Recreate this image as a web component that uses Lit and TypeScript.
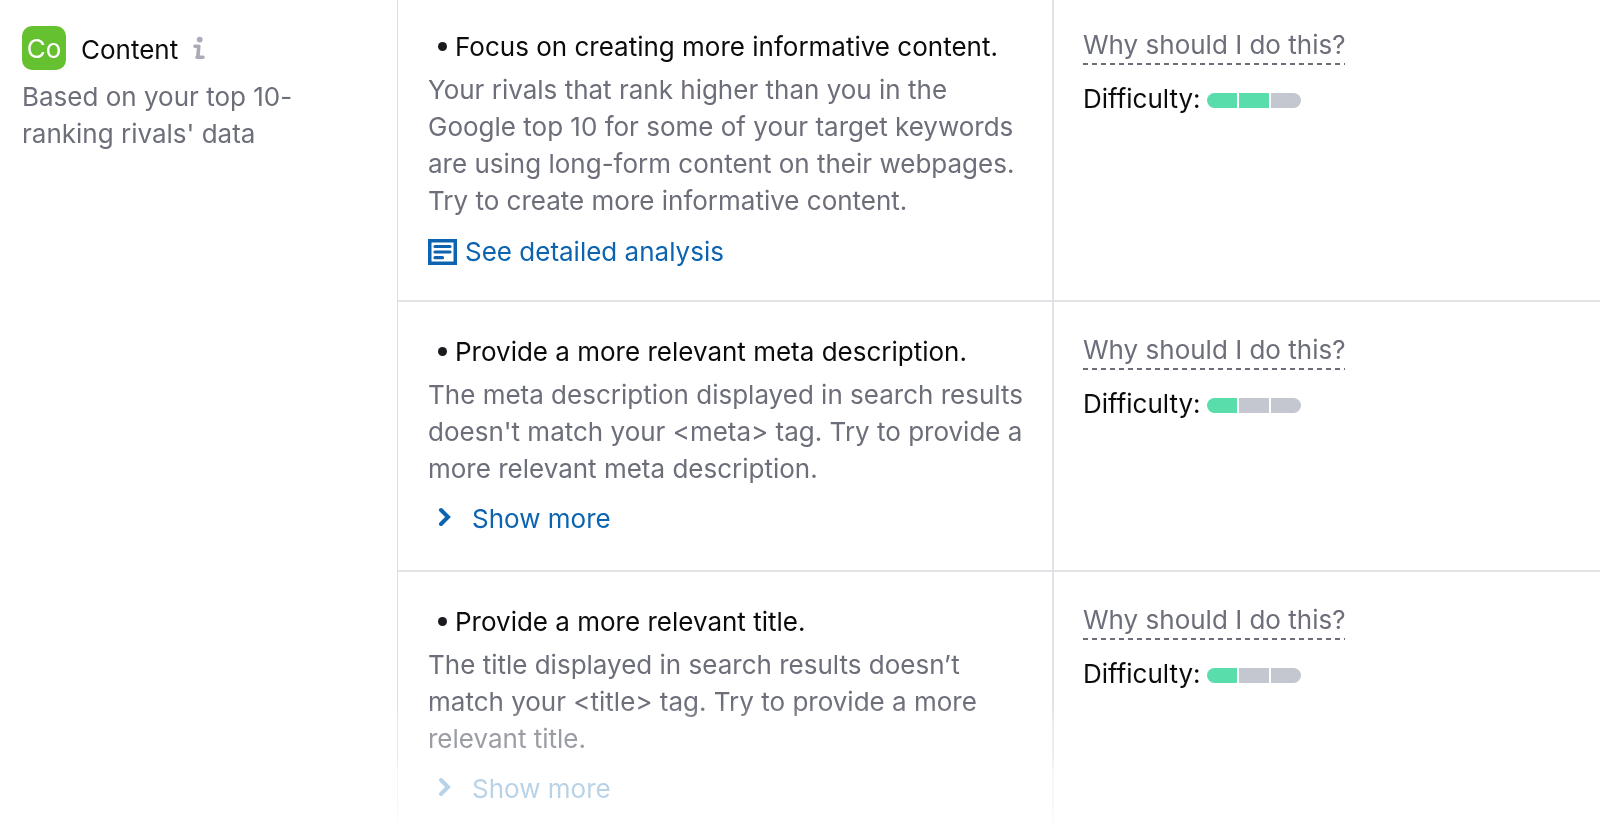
import { LitElement, html, css } from "lit";
import { customElement, property } from "lit/decorators.js";

interface Idea {
  title: string;
  text: string;
  action: "analysis" | "more";
  difficulty: number;
}

const IDEAS: Idea[] = [
  {
    title: "Focus on creating more informative content.",
    text: "Your rivals that rank higher than you in the Google top 10 for some of your target keywords are using long-form content on their webpages. Try to create more informative content.",
    action: "analysis",
    difficulty: 2,
  },
  {
    title: "Provide a more relevant meta description.",
    text: "The meta description displayed in search results doesn't match your <meta> tag. Try to provide a more relevant meta description.",
    action: "more",
    difficulty: 1,
  },
  {
    title: "Provide a more relevant title.",
    text: "The title displayed in search results doesn’t match your <title> tag. Try to provide a more relevant title.",
    action: "more",
    difficulty: 1,
  },
];

@customElement("difficulty-meter")
export class DifficultyMeter extends LitElement {
  @property({ type: Number }) level = 0;

  static styles = css`
    :host {
      display: flex;
      align-items: center;
      gap: 6px;
      color: #0b0b0d;
    }
    .bars {
      display: flex;
      gap: 2px;
      padding-top: 4px;
    }
    .bar {
      width: 30px;
      height: 15px;
      background: #c4c7cf;
    }
    .bar.on {
      background: #59ddaa;
    }
    .bar:first-child {
      border-radius: 8px 0 0 8px;
    }
    .bar:last-child {
      border-radius: 0 8px 8px 0;
    }
  `;

  render() {
    return html`<span>Difficulty:</span>
      <span class="bars" role="img" aria-label="${this.level} of 3">
        ${[1, 2, 3].map((n) => html`<span class="bar ${n <= this.level ? "on" : ""}"></span>`)}
      </span>`;
  }
}

@customElement("app-root")
export class AppRoot extends LitElement {
  static styles = css`
    :host {
      display: block;
      background: #fff;
      font-family: Inter, "Liberation Sans", sans-serif;
      font-size: 26px;
      line-height: 37px;
      color: #6c6e79;
    }
    .board {
      display: grid;
      grid-template-columns: minmax(0, 397fr) minmax(0, 1203fr);
      mask-image: linear-gradient(
        to top,
        transparent 2px,
        rgb(0 0 0 / 0.29) 34px,
        rgb(0 0 0 / 0.29) 60px,
        rgb(0 0 0 / 0.68) 82px,
        rgb(0 0 0 / 0.68) 108px,
        #000 130px
      );
    }
    .category {
      padding: 26px 64px 0 22px;
    }
    .head {
      display: flex;
      align-items: center;
      gap: 15px;
      margin-bottom: 8px;
    }
    .badge {
      display: grid;
      place-items: center;
      width: 44px;
      height: 44px;
      border-radius: 10px;
      background: #66c130;
      color: #fff;
    }
    h2,
    h3,
    p {
      margin: 0;
      font: inherit;
    }
    h2,
    h3 {
      color: #0b0b0d;
    }
    h2 {
      padding-top: 2px;
    }
    .info {
      display: flex;
      border: 0;
      padding: 0;
      background: none;
      color: #a9abb6;
    }
    .ideas {
      border-left: 1px solid #dcdde1;
    }
    .idea {
      display: grid;
      grid-template-columns: minmax(0, 656fr) minmax(0, 546fr);
      border-bottom: 2px solid #e2e3e6;
    }
    .idea:last-child {
      border-bottom: 0;
    }
    .what {
      padding: 31px 26px 33px 30px;
      border-right: 2px solid #e2e3e6;
    }
    .why {
      display: flex;
      flex-direction: column;
      align-items: flex-start;
      gap: 15px;
      padding: 29px;
    }
    .idea:first-child .what {
      padding-top: 28px;
      padding-bottom: 30px;
    }
    .idea:first-child .why {
      padding-top: 26px;
    }
    .idea:last-child .what {
      padding-bottom: 27px;
    }
    h3 {
      display: flex;
      align-items: center;
      gap: 8px;
      padding-left: 10px;
      margin-bottom: 6px;
    }
    .dot {
      flex: none;
      width: 9px;
      height: 9px;
      border-radius: 50%;
      background: #1a1a1e;
    }
    .link {
      display: flex;
      align-items: center;
      width: fit-content;
      margin-top: 13px;
      border: 0;
      padding: 0;
      background: none;
      font: inherit;
      color: #0c64b0;
      text-decoration: none;
    }
    a.link {
      gap: 8px;
      margin-top: 14px;
    }
    button.link {
      gap: 20px;
      padding-left: 10px;
    }
    .reason {
      border: 0;
      padding: 0 0 2px;
      font: inherit;
      color: inherit;
      background: repeating-linear-gradient(90deg, #6c6e79 0 5px, transparent 5px 9px) bottom / 100% 2px no-repeat;
    }
    svg {
      flex: none;
      display: block;
    }
  `;

  private action(idea: Idea) {
    return idea.action === "analysis"
      ? html`<a class="link" href="#analysis">
          <svg width="29" height="26" viewBox="0 0 29 26" fill="none" stroke="currentColor" aria-hidden="true">
            <rect x="1.75" y="1.75" width="25.5" height="22.5" stroke-width="3.5" />
            <path d="M7 7.5h15M7 13h15M7 18.7h7.5" stroke-width="3.2" stroke-linecap="round" />
          </svg>
          <span>See detailed analysis</span>
        </a>`
      : html`<button class="link" type="button">
          <svg width="14" height="24" viewBox="0 0 14 24" fill="none" stroke="currentColor" stroke-width="4" aria-hidden="true">
            <path d="M3 3 10 10 3 17" stroke-linecap="round" />
          </svg>
          <span>Show more</span>
        </button>`;
  }

  render() {
    return html`<main class="board">
      <section class="category">
        <div class="head">
          <span class="badge">Co</span>
          <h2>Content</h2>
          <button class="info" type="button" aria-label="About content ideas">
            <svg width="12" height="24" viewBox="0 0 12 24" fill="none" stroke="currentColor" aria-hidden="true">
              <circle cx="6.7" cy="3.6" r="2.9" fill="currentColor" stroke="none" />
              <path d="M2 10.2H5.8L4.8 21M4 21.3H10" stroke-width="3.6" stroke-linecap="round" stroke-linejoin="round" />
            </svg>
          </button>
        </div>
        <p>Based on your top 10-ranking rivals' data</p>
      </section>
      <section class="ideas">
        ${IDEAS.map(
          (idea) => html`<article class="idea">
            <div class="what">
              <h3><span class="dot"></span>${idea.title}</h3>
              <p>${idea.text}</p>
              ${this.action(idea)}
            </div>
            <div class="why">
              <button class="reason" type="button">Why should I do this?</button>
              <difficulty-meter level=${idea.difficulty}></difficulty-meter>
            </div>
          </article>`
        )}
      </section>
    </main>`;
  }
}
